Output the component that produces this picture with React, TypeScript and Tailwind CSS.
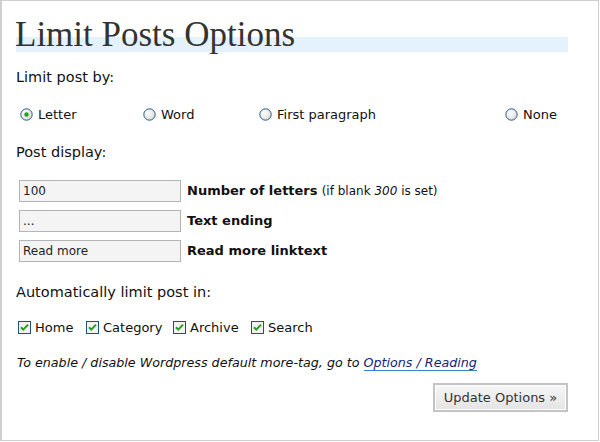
import { useState } from 'react'

const sans = "font-['DejaVu_Sans',sans-serif]"
const field = 'h-[22px] w-[162px] border border-[#b4b4b4] bg-[#f4f4f4] px-[3px] text-[12px] text-[#222] outline-none'

function Radio({ on }: { on: boolean }) {
  return (
    <svg width="13" height="13" viewBox="0 0 13 13" className="shrink-0">
      <defs>
        <radialGradient id="rg" cx="0.4" cy="0.4" r="0.7">
          <stop offset="0" stopColor="#ffffff" />
          <stop offset="1" stopColor="#d8d8d0" />
        </radialGradient>
      </defs>
      <circle cx="6.5" cy="6.5" r="5.7" fill="url(#rg)" stroke="#2a5a8a" strokeWidth="1" />
      {on && <circle cx="6.5" cy="6.5" r="2.2" fill="#21a121" />}
    </svg>
  )
}

function Check() {
  return (
    <svg width="13" height="13" viewBox="0 0 13 13" className="shrink-0">
      <rect x="0.5" y="0.5" width="12" height="12" fill="#f2f2ee" stroke="#1c5180" />
      <path d="M3 6.2 L5.3 8.6 L10 3.6" fill="none" stroke="#21a121" strokeWidth="2" />
    </svg>
  )
}

export default function App() {
  const [limit, setLimit] = useState('letter')
  const opts = [
    { k: 'letter', t: 'Letter', w: 'w-[123px]' },
    { k: 'word', t: 'Word', w: 'w-[116px]' },
    { k: 'para', t: 'First paragraph', w: 'w-[246px]' },
    { k: 'none', t: 'None', w: '' },
  ]
  const areas = [
    { t: 'Home', w: 'w-[68px]' },
    { t: 'Category', w: 'w-[87px]' },
    { t: 'Archive', w: 'w-[78px]' },
    { t: 'Search', w: '' },
  ]

  return (
    <div className={`${sans} h-[441px] w-[599px] border-l-2 border-r border-t border-b border-[#cfcfcf] bg-white text-[#111]`}>
      <div className="px-[12px]">
        <h2 className="relative mt-[14px] h-[40px] font-['Liberation_Serif',serif] text-[35px] leading-[40px] text-[#333]">
          <span className="absolute left-[2px] right-[18px] top-[22px] h-[15px] bg-[#e4f2fd]" />
          <span className="relative pl-[1px]">Limit Posts Options</span>
        </h2>

        <p className="mt-[12px] pl-[2px] text-[14.5px] leading-[20px]">Limit post by:</p>
        <div className="mt-[18px] flex items-center pl-[6px] text-[13px]">
          {opts.map((o) => (
            <label key={o.k} className={`flex items-center gap-[5px] ${o.w}`} onClick={() => setLimit(o.k)}>
              <Radio on={limit === o.k} />
              <span>{o.t}</span>
            </label>
          ))}
        </div>

        <p className="mt-[17px] pl-[2px] text-[14.5px] leading-[20px]">Post display:</p>
        <div className="mt-[18px] flex flex-col gap-[8px] pl-[5px] text-[13px]">
          <div className="flex items-center gap-[6px]">
            <input className={field} defaultValue="100" />
            <span><b>Number of letters</b> <span className="text-[12px]">(if blank <i>300</i> is set)</span></span>
          </div>
          <div className="flex items-center gap-[6px]">
            <input className={field} defaultValue="..." />
            <b>Text ending</b>
          </div>
          <div className="flex items-center gap-[6px]">
            <input className={field} defaultValue="Read more" />
            <b>Read more linktext</b>
          </div>
        </div>

        <p className="mt-[20px] pl-[2px] text-[14.5px] leading-[20px]">Automatically limit post in:</p>
        <div className="mt-[16px] flex items-center pl-[4px] text-[13px]">
          {areas.map((a) => (
            <label key={a.t} className={`flex items-center gap-[4px] ${a.w}`}>
              <Check />
              <span>{a.t}</span>
            </label>
          ))}
        </div>

        <p className="mt-[17px] pl-[3px] text-[12.7px] italic leading-[18px]">
          To enable / disable Wordpress default more-tag, go to{' '}
          <a href="#" className="border-b border-[#3a83c9] text-[#14237a]">Options / Reading</a>
        </p>

        <div className="mt-[11px] flex justify-end pr-[18px]">
          <button className="h-[29px] w-[135px] border-2 border-[#c4c4c4] bg-gradient-to-b from-[#f6f6f6] to-[#e4e4e4] text-[13px] text-[#333] shadow-[inset_0_0_0_1px_#fff]">
            Update Options »
          </button>
        </div>
      </div>
    </div>
  )
}
